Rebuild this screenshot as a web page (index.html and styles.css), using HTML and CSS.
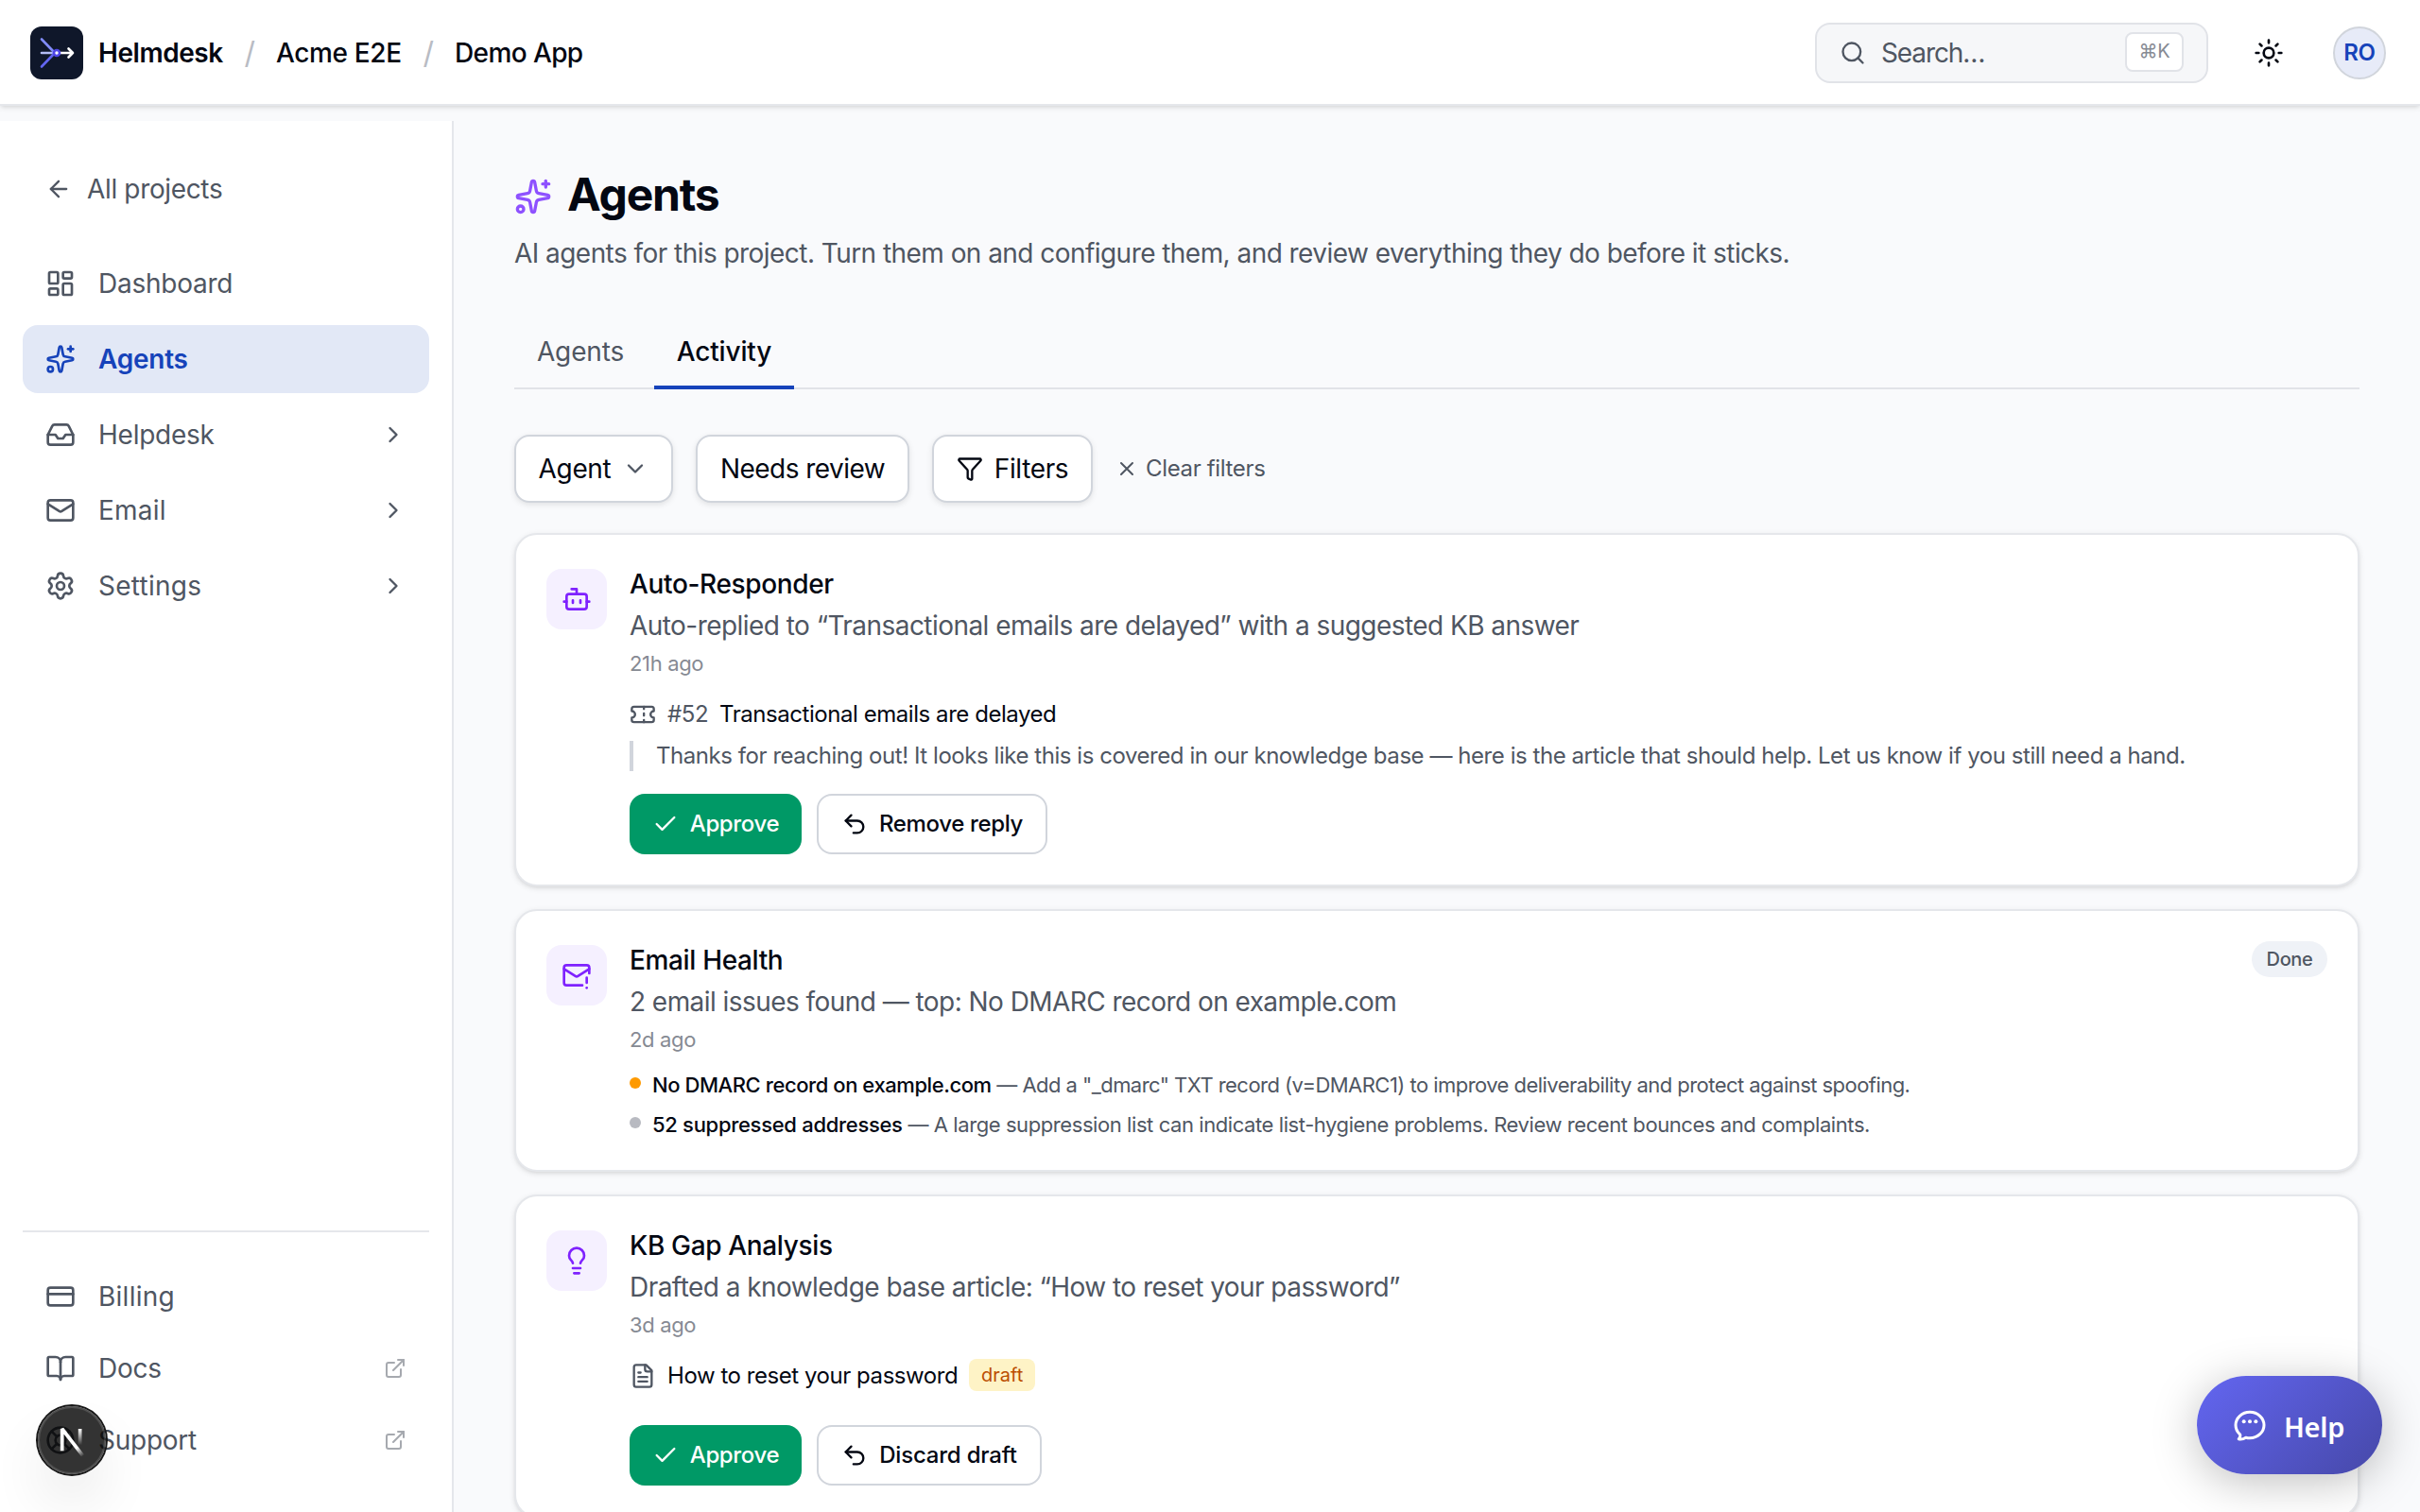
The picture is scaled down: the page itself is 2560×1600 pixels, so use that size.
FILE: index.html
```html
<!DOCTYPE html>
<html lang="en">
<head>
    <meta charset="UTF-8">
    <meta name="viewport" content="width=device-width, initial-scale=1.0">
    <title>Agents - Helmdesk</title>
    <link rel="stylesheet" href="styles.css">
</head>
<body>
    <!-- Shared icon shapes -->
    <svg class="sprite" aria-hidden="true">
        <symbol id="i-sparkles" viewBox="0 0 24 24">
            <path d="M11.017 2.814a1 1 0 0 1 1.966 0l1.051 5.558a2 2 0 0 0 1.594 1.594l5.558 1.051a1 1 0 0 1 0 1.966l-5.558 1.051a2 2 0 0 0-1.594 1.594l-1.051 5.558a1 1 0 0 1-1.966 0l-1.051-5.558a2 2 0 0 0-1.594-1.594l-5.558-1.051a1 1 0 0 1 0-1.966l5.558-1.051a2 2 0 0 0 1.594-1.594z"/>
            <path d="M20 2v4"/><path d="M22 4h-4"/><circle cx="4" cy="20" r="2"/>
        </symbol>
        <symbol id="i-chevron" viewBox="0 0 24 24"><path d="m9 18 6-6-6-6"/></symbol>
        <symbol id="i-external" viewBox="0 0 24 24"><path d="M15 3h6v6"/><path d="M10 14 21 3"/><path d="M18 13v6a2 2 0 0 1-2 2H5a2 2 0 0 1-2-2V8a2 2 0 0 1 2-2h6"/></symbol>
        <symbol id="i-check" viewBox="0 0 24 24"><path d="M20 6 9 17l-5-5"/></symbol>
        <symbol id="i-undo" viewBox="0 0 24 24"><path d="M9 14 4 9l5-5"/><path d="M4 9h10.5a5.5 5.5 0 0 1 5.5 5.5a5.5 5.5 0 0 1-5.5 5.5H11"/></symbol>
    </svg>

    <header class="topbar">
        <div class="crumbs">
            <svg class="logo" viewBox="0 0 56 56">
                <rect width="56" height="56" rx="12" fill="#0f172a"/>
                <g fill="none" stroke-width="2.6" stroke-linecap="round" stroke-linejoin="round">
                    <path d="M12 28h12" stroke="#b4bdf5"/>
                    <path d="M12 13.500 25 27" stroke="#818cf8"/>
                    <path d="M12 42.500 25 29" stroke="#6366f1"/>
                    <path d="M32 28h13M40.500 23.500 45 28l-4.500 4.500" stroke="#fff"/>
                </g>
                <circle cx="28" cy="28" r="3" fill="#fff" stroke="#4f46e5" stroke-width="2.600"/>
            </svg>
            <span class="brand">Helmdesk</span>
            <span class="slash">/</span>
            <span class="crumb crumb-org">Acme E2E</span>
            <span class="slash">/</span>
            <span class="crumb crumb-app">Demo App</span>
        </div>
        <div class="tools">
            <div class="search">
                <svg class="icon s28" viewBox="0 0 24 24"><circle cx="11" cy="11" r="8"/><path d="m21 21-4.340-4.340"/></svg>
                <span class="search-text">Search…</span>
                <kbd class="kbd">⌘K</kbd>
            </div>
            <button class="theme-toggle" aria-label="Toggle theme">
                <svg class="icon s32" viewBox="0 0 24 24"><circle cx="12" cy="12" r="4"/><path d="M12 2v2M12 20v2M4.930 4.930l1.410 1.410M17.660 17.660l1.410 1.410M2 12h2M20 12h2M6.340 17.660l-1.410 1.410M19.070 4.930l-1.410 1.410"/></svg>
            </button>
            <div class="avatar">RO</div>
        </div>
    </header>

    <div class="layout">
        <aside class="sidebar">
            <a class="back">
                <svg class="icon s28" viewBox="0 0 24 24"><path d="m12 19-7-7 7-7"/><path d="M19 12H5"/></svg>
                <span>All projects</span>
            </a>
            <nav class="nav">
                <a class="nav-item">
                    <svg class="icon s32" viewBox="0 0 24 24"><rect width="7" height="9" x="3" y="3" rx="1"/><rect width="7" height="5" x="14" y="3" rx="1"/><rect width="7" height="9" x="14" y="12" rx="1"/><rect width="7" height="5" x="3" y="16" rx="1"/></svg>
                    <span class="nav-label">Dashboard</span>
                </a>
                <a class="nav-item active">
                    <svg class="icon s32"><use href="#i-sparkles"/></svg>
                    <span class="nav-label">Agents</span>
                </a>
                <a class="nav-item">
                    <svg class="icon s32" viewBox="0 0 24 24"><path d="M22 12h-6l-2 3h-4l-2-3H2"/><path d="M5.450 5.110 2 12v6a2 2 0 0 0 2 2h16a2 2 0 0 0 2-2v-6l-3.450-6.890A2 2 0 0 0 16.760 4H7.240a2 2 0 0 0-1.790 1.110z"/></svg>
                    <span class="nav-label">Helpdesk</span>
                    <svg class="icon s28"><use href="#i-chevron"/></svg>
                </a>
                <a class="nav-item">
                    <svg class="icon s32" viewBox="0 0 24 24"><path d="m22 7-8.991 5.727a2 2 0 0 1-2.009 0L2 7"/><rect x="2" y="4" width="20" height="16" rx="2"/></svg>
                    <span class="nav-label wide">Email</span>
                    <svg class="icon s28"><use href="#i-chevron"/></svg>
                </a>
                <a class="nav-item">
                    <svg class="icon s32" viewBox="0 0 24 24"><path d="M9.671 4.136a2.340 2.340 0 0 1 4.659 0 2.340 2.340 0 0 0 3.319 1.915 2.340 2.340 0 0 1 2.330 4.033 2.340 2.340 0 0 0 0 3.831 2.340 2.340 0 0 1-2.330 4.033 2.340 2.340 0 0 0-3.319 1.915 2.340 2.340 0 0 1-4.659 0 2.340 2.340 0 0 0-3.320-1.915 2.340 2.340 0 0 1-2.330-4.033 2.340 2.340 0 0 0 0-3.831A2.340 2.340 0 0 1 6.350 6.051a2.340 2.340 0 0 0 3.319-1.915"/><circle cx="12" cy="12" r="3"/></svg>
                    <span class="nav-label wide">Settings</span>
                    <svg class="icon s28"><use href="#i-chevron"/></svg>
                </a>
            </nav>
            <div class="side-footer">
                <a class="nav-item">
                    <svg class="icon s32" viewBox="0 0 24 24"><rect width="20" height="14" x="2" y="5" rx="2"/><path d="M2 10h20"/></svg>
                    <span class="nav-label wide">Billing</span>
                </a>
                <a class="nav-item">
                    <svg class="icon s32" viewBox="0 0 24 24"><path d="M12 7v14"/><path d="M3 18a1 1 0 0 1-1-1V4a1 1 0 0 1 1-1h5a4 4 0 0 1 4 4 4 4 0 0 1 4-4h5a1 1 0 0 1 1 1v13a1 1 0 0 1-1 1h-6a3 3 0 0 0-3 3 3 3 0 0 0-3-3z"/></svg>
                    <span class="nav-label">Docs</span>
                    <svg class="icon s24 faded"><use href="#i-external"/></svg>
                </a>
                <a class="nav-item">
                    <svg class="icon s32" viewBox="0 0 24 24"><circle cx="12" cy="12" r="10"/><path d="m4.930 4.930 4.240 4.240M14.830 9.170l4.240-4.240M14.830 14.830l4.240 4.240M9.170 14.830l-4.240 4.240"/><circle cx="12" cy="12" r="4"/></svg>
                    <span class="nav-label">Support</span>
                    <svg class="icon s24 faded"><use href="#i-external"/></svg>
                </a>
            </div>
        </aside>

        <main class="main">
            <h1 class="page-title">
                <svg class="icon s40"><use href="#i-sparkles"/></svg>
                <span>Agents</span>
            </h1>
            <p class="page-sub">AI agents for this project. Turn them on and configure them, and review everything they do before it sticks.</p>

            <div class="tabs">
                <a class="tab">Agents</a>
                <a class="tab selected">Activity</a>
            </div>

            <div class="filters">
                <button class="filter-btn filter-agent">Agent <svg class="icon s28 muted" viewBox="0 0 24 24"><path d="m6 9 6 6 6-6"/></svg></button>
                <button class="filter-btn filter-review">Needs review</button>
                <button class="filter-btn filter-more"><svg class="icon s28" viewBox="0 0 24 24"><path d="M10 20a1 1 0 0 0 .553.895l2 1A1 1 0 0 0 14 21v-7a2 2 0 0 1 .517-1.341L21.740 4.670A1 1 0 0 0 21 3H3a1 1 0 0 0-.742 1.670l7.225 7.989A2 2 0 0 1 10 14z"/></svg> Filters</button>
                <button class="clear-btn"><svg class="icon s24" viewBox="0 0 24 24"><path d="M18 6 6 18M6 6l12 12"/></svg> Clear filters</button>
            </div>

            <div class="cards">
                <article class="card">
                    <div class="tile">
                        <svg class="icon s32" viewBox="0 0 24 24"><path d="M12 8V4H8"/><rect width="16" height="12" x="4" y="8" rx="2"/><path d="M2 14h2M20 14h2M15 13v2M9 13v2"/></svg>
                    </div>
                    <div class="card-body">
                        <h2 class="card-title">Auto-Responder</h2>
                        <p class="card-text">Auto-replied to “Transactional emails are delayed” with a suggested KB answer</p>
                        <p class="card-time">21h ago</p>
                        <div class="ref">
                            <svg class="icon s28 muted" viewBox="0 0 24 24"><path d="M2 9a3 3 0 0 1 0 6v2a2 2 0 0 0 2 2h16a2 2 0 0 0 2-2v-2a3 3 0 0 1 0-6V7a2 2 0 0 0-2-2H4a2 2 0 0 0-2 2Z"/><path d="M13 5v2M13 17v2M13 11v2"/></svg>
                            <span class="ref-id">#52</span>
                            <span>Transactional emails are delayed</span>
                        </div>
                        <blockquote class="quote">Thanks for reaching out! It looks like this is covered in our knowledge base — here is the article that should help. Let us know if you still need a hand.</blockquote>
                        <div class="actions">
                            <button class="btn approve"><svg class="icon s28"><use href="#i-check"/></svg> Approve</button>
                            <button class="btn outline btn-remove"><svg class="icon s28"><use href="#i-undo"/></svg> Remove reply</button>
                        </div>
                    </div>
                </article>

                <article class="card">
                    <div class="tile">
                        <svg class="icon s32" viewBox="0 0 24 24"><path d="M22 10.500V6a2 2 0 0 0-2-2H4a2 2 0 0 0-2 2v12c0 1.100.900 2 2 2h12.500"/><path d="m22 7-8.970 5.700a1.940 1.940 0 0 1-2.060 0L2 7"/><path d="M20 14v4"/><path d="M20 22v.010"/></svg>
                    </div>
                    <div class="card-body">
                        <h2 class="card-title">Email Health</h2>
                        <p class="card-text">2 email issues found — top: No DMARC record on example.com</p>
                        <p class="card-time">2d ago</p>
                        <ul class="issues">
                            <li class="issue tight"><span class="dot warn"></span><span><strong>No DMARC record on example.com</strong> — Add a "_dmarc" TXT record (v=DMARC1) to improve deliverability and protect against spoofing.</span></li>
                            <li class="issue"><span class="dot"></span><span><strong>52 suppressed addresses</strong> — A large suppression list can indicate list-hygiene problems. Review recent bounces and complaints.</span></li>
                        </ul>
                    </div>
                    <span class="status">Done</span>
                </article>

                <article class="card">
                    <div class="tile">
                        <svg class="icon s32" viewBox="0 0 24 24"><path d="M15 14c.200-1 .700-1.700 1.500-2.500 1-.900 1.500-2.200 1.500-3.500A6 6 0 0 0 6 8c0 1 .200 2.200 1.500 3.500.700.700 1.300 1.500 1.500 2.500"/><path d="M9 18h6M10 22h4"/></svg>
                    </div>
                    <div class="card-body">
                        <h2 class="card-title">KB Gap Analysis</h2>
                        <p class="card-text">Drafted a knowledge base article: “How to reset your password”</p>
                        <p class="card-time">3d ago</p>
                        <div class="ref">
                            <svg class="icon s28 muted" viewBox="0 0 24 24"><path d="M15 2H6a2 2 0 0 0-2 2v16a2 2 0 0 0 2 2h12a2 2 0 0 0 2-2V7Z"/><path d="M14 2v4a2 2 0 0 0 2 2h4"/><path d="M10 9H8M16 13H8M16 17H8"/></svg>
                            <span>How to reset your password</span>
                            <span class="draft">draft</span>
                        </div>
                        <div class="actions spaced">
                            <button class="btn approve"><svg class="icon s28"><use href="#i-check"/></svg> Approve</button>
                            <button class="btn outline btn-discard"><svg class="icon s28"><use href="#i-undo"/></svg> Discard draft</button>
                        </div>
                    </div>
                </article>
            </div>
        </main>
    </div>

    <div class="dev-badge">
        <svg width="80" height="80" viewBox="0 0 40 40" fill="none">
            <defs>
                <linearGradient id="diag" gradientUnits="userSpaceOnUse" x1="9.950" y1="11.140" x2="13.500" y2="15.500"><stop stop-color="#fff"/><stop offset="1" stop-color="#fff" stop-opacity="0"/></linearGradient>
                <linearGradient id="stem" gradientUnits="userSpaceOnUse" x1="11.800" y1="1" x2="11.750" y2="9.600"><stop stop-color="#fff"/><stop offset="1" stop-color="#fff" stop-opacity="0"/></linearGradient>
            </defs>
            <g transform="translate(12.500 13)" stroke-width="1.860">
                <path d="M13.300 15.200 2.340 1V12.600" stroke="url(#diag)" stroke-linejoin="bevel"/>
                <path d="M11.825 1V13.100" stroke="url(#stem)"/>
            </g>
        </svg>
    </div>

    <button class="help">
        <svg width="40" height="40" viewBox="0 0 24 24" fill="none" stroke="currentColor" stroke-width="1.800" stroke-linecap="round" stroke-linejoin="round">
            <path d="M21 12c0 4.556-4.030 8.250-9 8.250a9.764 9.764 0 0 1-2.555-.337A5.972 5.972 0 0 1 5.410 20.970a5.969 5.969 0 0 1-.474-.065 4.480 4.480 0 0 0 .978-2.025c.090-.457-.133-.901-.467-1.226C3.930 16.178 3 14.189 3 12c0-4.556 4.030-8.250 9-8.250s9 3.694 9 8.250Z"/>
            <g fill="currentColor" stroke="none"><circle cx="8.200" cy="9.750" r="1.200"/><circle cx="12" cy="9.750" r="1.200"/><circle cx="15.800" cy="9.750" r="1.200"/></g>
        </svg>
        <span class="help-label">Help</span>
    </button>
</body>
</html>
```
FILE: styles.css
```css
:root {
    --text: #030712;
    --muted: #4f5662;
    --subtle: #868a93;
    --primary: #1643ba;
    --border: #e5e7eb;
    --border-strong: #d1d5dc;
    --bg: #f9fafc;
    --purple: #7f22fe;
}

* {
    box-sizing: border-box;
}

body {
    margin: 0;
    height: 1600px;
    overflow: hidden;
    background: var(--bg);
    color: var(--text);
    font-family: Inter, "Liberation Sans", sans-serif;
    font-size: 28px;
    line-height: 40px;
    letter-spacing: -0.35px;
}

h1, h2, p, ul, blockquote {
    margin: 0;
    padding: 0;
}

button {
    font: inherit;
    letter-spacing: inherit;
    color: inherit;
    border: none;
    background: none;
    padding: 0;
}

.sprite {
    position: absolute;
    width: 0;
    height: 0;
}

.icon {
    flex: none;
    fill: none;
    stroke: currentColor;
    stroke-width: 2;
    stroke-linecap: round;
    stroke-linejoin: round;
}

.s24 { width: 24px; height: 24px; }
.s28 { width: 28px; height: 28px; }
.s32 { width: 32px; height: 32px; }
.s40 { width: 40px; height: 40px; }

.muted { color: var(--muted); }
.faded { opacity: 0.5; }

/* Top bar */
.topbar {
    position: relative;
    display: flex;
    justify-content: space-between;
    align-items: center;
    height: 112px;
    padding: 2px 36px 0 32px;
    background: #fff;
    border-bottom: 2px solid var(--border);
    box-shadow: 0 2px 6px rgba(0, 0, 0, 0.1), 0 2px 4px -2px rgba(0, 0, 0, 0.1);
}

.crumbs,
.tools {
    display: flex;
    align-items: center;
}

.logo {
    width: 56px;
    height: 56px;
    margin-right: 16px;
}

.brand {
    width: 132px;
    font-weight: 600;
    letter-spacing: -0.45px;
    white-space: nowrap;
}

.slash {
    width: 56px;
    text-align: center;
    font-size: 32px;
    color: #b9bcc4;
}

.crumb {
    font-weight: 500;
    white-space: nowrap;
}

.crumb-org { width: 133px; }
.crumb-app { letter-spacing: -0.6px; }

.search {
    display: flex;
    align-items: center;
    width: 416px;
    height: 64px;
    padding: 0 24px;
    background: #f6f7f9;
    border: 2px solid #e1e3e8;
    border-radius: 16px;
    color: var(--muted);
}

.search-text {
    flex: 1;
    margin-left: 16px;
    letter-spacing: -1.1px;
}

.kbd {
    width: 62px;
    height: 42px;
    margin-top: -2px;
    background: #fff;
    border: 2px solid #e1e3e8;
    border-radius: 8px;
    color: var(--subtle);
    font-family: Inter, "DejaVu Sans", sans-serif;
    font-size: 20px;
    line-height: 36px;
    text-align: center;
}

.theme-toggle {
    display: flex;
    justify-content: center;
    width: 128px;
    margin-right: 4px;
}

.avatar {
    width: 56px;
    height: 56px;
    border: 2px solid #d1d5dc;
    border-radius: 50%;
    background: #e7ebf8;
    color: var(--primary);
    font-size: 24px;
    font-weight: 600;
    line-height: 52px;
    text-align: center;
}

/* Sidebar */
.layout {
    display: flex;
    height: 1488px;
    padding-top: 16px;
}

.sidebar {
    display: flex;
    flex-direction: column;
    width: 480px;
    padding: 36px 24px 40px;
    background: #fff;
    border-right: 2px solid var(--border);
    color: var(--muted);
}

.back {
    display: flex;
    align-items: center;
    gap: 16px;
    height: 72px;
    margin-bottom: 28px;
    padding: 0 24px;
}

.nav {
    display: flex;
    flex-direction: column;
    gap: 8px;
}

.nav-item {
    display: flex;
    align-items: center;
    gap: 24px;
    height: 72px;
    padding: 0 24px;
    border-radius: 16px;
}

.nav-item.active {
    background: #e2e8f6;
    color: var(--primary);
    font-weight: 600;
}

.nav-label {
    flex: 1;
    letter-spacing: -0.25px;
}

.nav-label.wide {
    letter-spacing: 0.25px;
}

.side-footer {
    display: flex;
    flex-direction: column;
    gap: 4px;
    margin-top: auto;
    padding-top: 32px;
    border-top: 2px solid var(--border);
}

/* Main column */
.main {
    flex: 1;
    padding: 52px 64px 0;
}

.page-title {
    display: flex;
    align-items: center;
    gap: 16px;
    height: 56px;
    font-size: 48px;
    font-weight: 700;
    letter-spacing: -1.2px;
}

.page-title .icon {
    color: #8e51ff;
}

.page-title span {
    padding-bottom: 4px;
}

.page-sub {
    margin-top: 12px;
    color: var(--muted);
    letter-spacing: -0.55px;
}

.tabs {
    display: flex;
    gap: 8px;
    margin-top: 44px;
    border-bottom: 2px solid #e1e3e8;
}

.tab {
    width: 140px;
    height: 80px;
    margin-bottom: -2px;
    padding-top: 20px;
    border-bottom: 4px solid transparent;
    color: var(--muted);
    letter-spacing: -0.15px;
    text-align: center;
}

.tab.selected {
    width: 148px;
    border-color: var(--primary);
    color: var(--text);
    font-weight: 500;
}

.filters {
    display: flex;
    align-items: center;
    gap: 24px;
    margin-top: 48px;
}

.filter-btn {
    display: flex;
    align-items: center;
    justify-content: center;
    gap: 12px;
    height: 72px;
    background: #fff;
    border: 2px solid var(--border-strong);
    border-radius: 16px;
    box-shadow: 0 2px 6px rgba(0, 0, 0, 0.1);
    white-space: nowrap;
}

.filter-agent { width: 168px; }
.filter-review { width: 226px; letter-spacing: -0.55px; }
.filter-more { width: 170px; }

.clear-btn {
    display: flex;
    align-items: center;
    gap: 8px;
    color: var(--muted);
    font-size: 24px;
}

/* Activity cards */
.cards {
    display: flex;
    flex-direction: column;
    gap: 24px;
    margin-top: 32px;
}

.card {
    display: flex;
    align-items: flex-start;
    gap: 24px;
    padding: 32px;
    background: #fff;
    border: 2px solid var(--border);
    border-radius: 24px;
    box-shadow: 0 2px 6px rgba(0, 0, 0, 0.1), 0 2px 4px -2px rgba(0, 0, 0, 0.1);
}

.tile {
    display: flex;
    align-items: center;
    justify-content: center;
    width: 64px;
    height: 64px;
    margin-top: 4px;
    border-radius: 16px;
    background: #f5f0ff;
    color: var(--purple);
}

.card-body {
    flex: 1;
}

.card-title {
    font-size: 28px;
    font-weight: 500;
}

.card-text {
    margin-top: 4px;
    color: var(--muted);
    letter-spacing: -0.55px;
}

.card-time {
    margin-top: 4px;
    color: var(--subtle);
    font-size: 22px;
    line-height: 32px;
}

.ref {
    display: flex;
    align-items: center;
    gap: 12px;
    height: 34px;
    margin-top: 20px;
    padding-top: 2px;
    font-size: 24px;
    line-height: 34px;
    letter-spacing: -0.45px;
}

.ref-id {
    color: var(--muted);
}

.quote {
    margin-top: 12px;
    padding-left: 24px;
    border-left: 4px solid var(--border-strong);
    color: var(--muted);
    font-size: 24px;
    line-height: 32px;
    letter-spacing: -0.445px;
}

.actions {
    display: flex;
    gap: 16px;
    margin-top: 24px;
}

.actions.spaced {
    margin-top: 36px;
}

.btn {
    display: flex;
    align-items: center;
    justify-content: center;
    gap: 12px;
    height: 64px;
    border-radius: 16px;
    font-size: 24px;
    font-weight: 500;
}

.btn.approve {
    width: 182px;
    background: #009966;
    color: #fff;
}

.btn.outline {
    border: 2px solid var(--border-strong);
    background: #fff;
}

.btn-remove { width: 244px; }
.btn-discard { width: 238px; letter-spacing: -0.2px; }

.issues {
    display: flex;
    flex-direction: column;
    gap: 10px;
    margin-top: 16px;
    list-style: none;
    color: var(--muted);
    font-size: 22px;
    line-height: 32px;
}

.issue {
    display: flex;
    gap: 12px;
    letter-spacing: -0.42px;
}

.issue strong {
    color: var(--text);
    font-weight: 500;
    letter-spacing: -0.3px;
}

.issue.tight {
    letter-spacing: -0.54px;
}

.issue.tight strong {
    letter-spacing: -0.43px;
}

.dot {
    width: 12px;
    height: 12px;
    margin-top: 8px;
    border-radius: 50%;
    background: #b8bac1;
}

.dot.warn {
    background: #fe9a00;
}

.status {
    width: 80px;
    border-radius: 19px;
    background: #eff2f7;
    color: var(--muted);
    font-size: 20px;
    font-weight: 500;
    line-height: 38px;
    text-align: center;
}

.draft {
    width: 70px;
    margin-top: -2px;
    border-radius: 8px;
    background: #fef3c6;
    color: #bb4d00;
    font-size: 20px;
    letter-spacing: 0;
    text-align: center;
}

/* Floating controls */
.dev-badge {
    position: absolute;
    left: 40px;
    top: 1488px;
    display: flex;
    align-items: center;
    justify-content: center;
    width: 72px;
    height: 72px;
    border-radius: 50%;
    background: rgba(0, 0, 0, 0.8);
    box-shadow: 0 0 0 2px #171717, inset 0 0 0 2px rgba(255, 255, 255, 0.14), 0 32px 64px -16px rgba(0, 0, 0, 0.24);
}

.dev-badge svg {
    flex: none;
}

.help {
    position: absolute;
    right: 40px;
    top: 1456px;
    display: flex;
    align-items: center;
    gap: 16px;
    width: 196px;
    height: 104px;
    padding: 0 36px;
    border-radius: 52px;
    background: linear-gradient(135deg, #6366f1, #4648a8);
    box-shadow: 0 8px 48px rgba(0, 0, 0, 0.25);
    color: #fff;
    font-family: "Noto Sans", sans-serif;
    font-size: 29px;
    font-weight: 600;
    letter-spacing: -0.3px;
}

.help-label {
    padding-top: 3px;
}
```
